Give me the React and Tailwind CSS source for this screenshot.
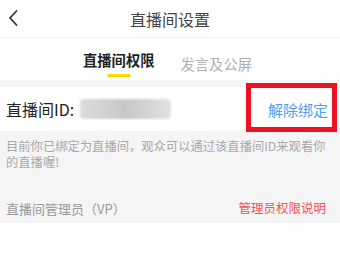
import React from "react";

export default function App() {
  const font = { fontFamily: '"Noto Sans CJK SC", "Noto Sans", sans-serif' };
  return (
    <div className="w-[340px] h-[257px] bg-white overflow-hidden" style={font}>
      {/* header */}
      <div className="relative h-[38px] flex items-center justify-center border-b border-[#f1f1f1]">
        <svg className="absolute left-[7px] top-[9px]" width="12" height="18" viewBox="0 0 12 18" fill="none">
          <path d="M9.5 2 L3 9 L9.5 16" stroke="#333" strokeWidth="1.8" strokeLinecap="round" strokeLinejoin="round" />
        </svg>
        <span className="text-[16px] text-[#444] leading-none">直播间设置</span>
      </div>
      {/* tabs */}
      <div className="h-[42px] flex justify-center gap-[26px] pr-[5px]">
        <div className="flex flex-col items-center pt-[13px]">
          <span className="text-[14.3px] font-bold text-[#222] leading-[18px]">直播间权限</span>
          <div className="mt-[5px] w-[24px] h-[3px] bg-[#ffd800] rounded-full" />
        </div>
        <div className="pt-[13px]">
          <span className="text-[14.3px] text-[#b0b0b0] leading-[18px]">发言及公屏</span>
        </div>
      </div>
      {/* gray band */}
      <div className="h-[7px] bg-[#f5f5f5]" />
      {/* ID row */}
      <div className="relative h-[44px] flex items-center pl-[6px] pr-[12px] bg-white">
        <span className="text-[16px] text-[#222] leading-none">直播间ID:</span>
        <div className="ml-[6px] w-[91px] h-[20px] rounded-sm bg-gradient-to-r from-[#dcdcdc] via-[#c8c8c8] to-[#e2e2e2] blur-[1px]" />
        <span className="ml-auto text-[15px] text-[#4aa0ec] leading-none">解除绑定</span>
        <div className="absolute left-[246px] top-[-4px] w-[91px] h-[49px] border-[5px] border-[#ee1122]" />
      </div>
      {/* gray section */}
      <div className="h-[92px] bg-[#f5f5f5] pl-[6px] pr-[4px] pt-[7px] flex flex-col">
        <p className="text-[12.3px] text-[#a8a8a8] leading-[16px] whitespace-nowrap">
          目前你已绑定为直播间，观众可以通过该直播间ID来观看你
          <br />
          的直播喔!
        </p>
        <div className="mt-auto mb-[8px] pr-[8px] flex items-center justify-between">
          <span className="text-[13px] text-[#9a9a9a] leading-none">直播间管理员（VP）</span>
          <span className="text-[12.5px] text-[#f5504f] leading-none mr-[2px]">管理员权限说明</span>
        </div>
      </div>
    </div>
  );
}
